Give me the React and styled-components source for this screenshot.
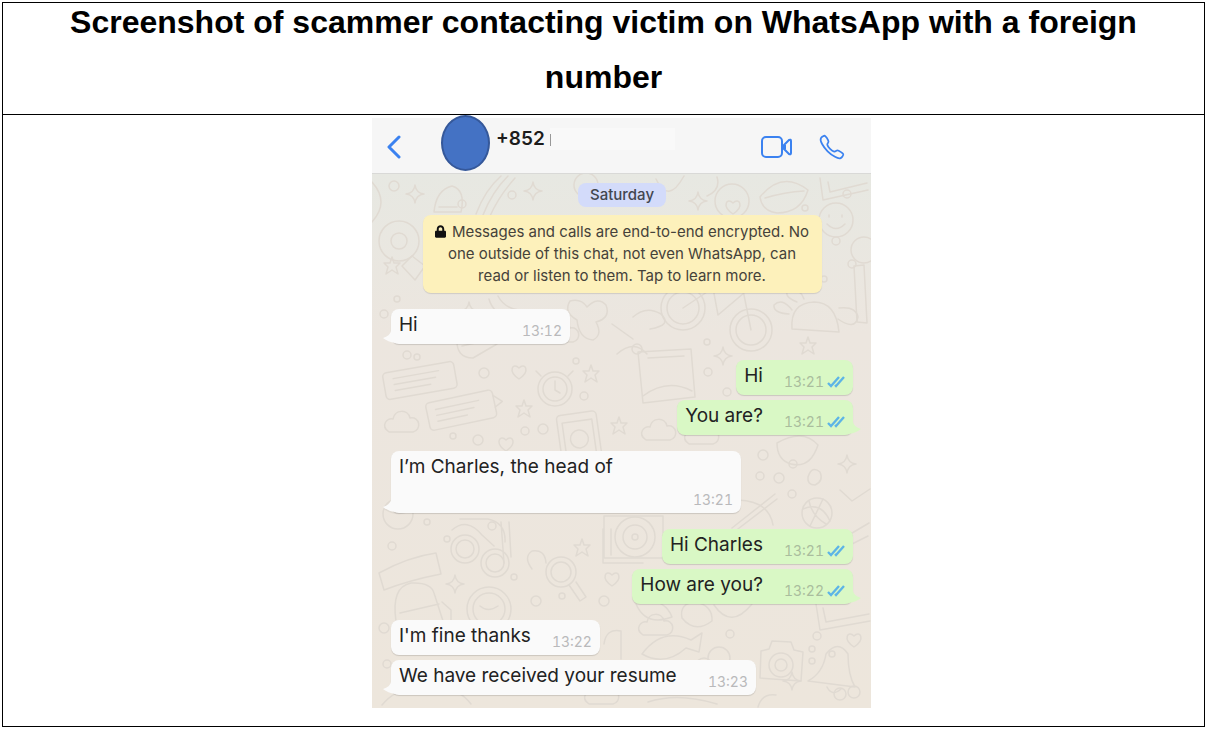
import styled, { createGlobalStyle } from "styled-components";
import { IoCallOutline } from "react-icons/io5";
import { FaLock } from "react-icons/fa";

const groups = [
  { side: "in", items: [{ text: "Hi", time: "13:12", minWidth: 179 }] },
  {
    side: "out",
    items: [
      { text: "Hi", time: "13:21" },
      { text: "You are?", time: "13:21" },
    ],
  },
  {
    side: "in",
    items: [
      {
        text: "I’m Charles, the head of",
        time: "13:21",
        minWidth: 350,
        tall: true,
      },
    ],
  },
  {
    side: "out",
    items: [
      { text: "Hi Charles", time: "13:21" },
      { text: "How are you?", time: "13:22" },
    ],
  },
  {
    side: "in",
    items: [
      { text: "I'm fine thanks", time: "13:22" },
      { text: "We have received your resume", time: "13:23", minWidth: 365 },
    ],
  },
];

const STAR = "M0-9 2-3 8-3 4 1 6 8 0 4-6 8-4 1-8-3-2-3Z";
const SPARK = "M0-9Q1-1 9 0Q1 1 0 9Q-1 1-9 0Q-1-1 0-9Z";
const HEART = "M0 7C-12-1-6-10 0-4C6-10 12-1 0 7Z";
const CLOUD = "M-13 8C-22 2-15-7-9-5C-7-15 6-15 8-6C18-8 20 6 11 8Z";

const marks = [
  [STAR, 152, 235], [STAR, 186, 312], [STAR, 219, 200], [STAR, 436, 172],
  [STAR, 210, 374], [STAR, 92, 312], [STAR, 247, 252], [STAR, 20, 92],
  [SPARK, 43, 20], [SPARK, 326, 27], [SPARK, 351, 182], [SPARK, 475, 290],
  [SPARK, 83, 410], [SPARK, 161, 17], [SPARK, 420, 507], [SPARK, 97, 137],
  [HEART, 134, 270], [HEART, 240, 405], [HEART, 361, 33], [HEART, 302, 296],
  [HEART, 147, 198], [HEART, 482, 466],
  [CLOUD, 30, 250], [CLOUD, 287, 258], [CLOUD, 284, 453], [CLOUD, 330, 262],
  [CLOUD, 190, 160], [CLOUD, 230, 522],
];

const dots = [
  [22, 12, 5], [140, 21, 4], [214, 11, 12], [90, 30, 4], [35, 181, 4],
  [45, 183, 3], [204, 187, 3], [112, 199, 5], [153, 257, 4], [171, 255, 5],
  [106, 266, 5], [212, 222, 4], [81, 262, 3], [391, 281, 5], [421, 290, 4],
  [388, 302, 4], [407, 304, 5], [336, 198, 4], [355, 218, 4], [464, 67, 4],
  [480, 90, 4], [452, 105, 3], [335, 168, 3], [142, 403, 3], [164, 427, 5],
  [232, 427, 5], [190, 422, 3], [12, 454, 5], [440, 475, 3], [440, 487, 3],
  [445, 462, 4], [358, 460, 4], [15, 490, 4], [460, 480, 3], [468, 520, 6],
  [482, 518, 6], [75, 365, 3], [55, 348, 3], [20, 372, 4], [120, 352, 4],
  [12, 140, 4], [25, 125, 3], [475, 20, 4], [433, 34, 3], [265, 175, 5],
];

const Doodles = () => (
  <Wallpaper viewBox="0 0 499 534" preserveAspectRatio="xMidYMin slice" aria-hidden="true">
    {marks.map(([d, x, y]) => (
      <path key={`${x}-${y}`} d={d} transform={`translate(${x} ${y})`} />
    ))}
    {dots.map(([x, y, r]) => (
      <circle key={`${x}-${y}`} cx={x} cy={y} r={r} />
    ))}
    {/* speech cards */}
    <g transform="rotate(-10 48 207)">
      <rect x="12" y="193" width="72" height="27" rx="4" />
      <path d="M22 200h46M22 206h42M22 212h36" />
    </g>
    <g transform="rotate(-12 90 235)">
      <rect x="55" y="222" width="68" height="28" rx="4" />
      <path d="M64 230h44M64 236h38M64 242h30M123 228l8 8-8 4" />
    </g>
    {/* clock */}
    <circle cx="183" cy="215" r="17" />
    <circle cx="183" cy="215" r="12" />
    <path d="M183 207v9l5 3M169 202l-5-5M196 202l5-5" />
    {/* photo frame */}
    <g transform="rotate(-8 207 262)">
      <rect x="187" y="239" width="40" height="50" rx="4" />
      <rect x="192" y="247" width="30" height="36" />
      <circle cx="207" cy="265" r="9" />
    </g>
    {/* book */}
    <path d="M266 178l53-3 4 48-52 6zM271 222q24-18 49-5M276 184l36-2" />
    {/* bicycle */}
    <circle cx="311" cy="134" r="22" />
    <circle cx="311" cy="134" r="16" />
    <circle cx="379" cy="156" r="21" />
    <circle cx="379" cy="156" r="15" />
    <path d="M311 134l30-20 30 2 8 40M341 114l5 27 26-22M364 107h14M334 108h12" />
    {/* smiley */}
    <circle cx="464" cy="46" r="17" />
    <path d="M457 41v2M470 41v2M455 50q9 9 18 0" />
    <circle cx="492" cy="76" r="13" />
    {/* turtle */}
    <path d="M420 155q-2-26 22-27 22 0 25 30zM417 140q-16-1-15-9 8-8 18 5M466 145q17 12 20-2-2-11-19-9M425 128q-15-6-8-13 12 0 15 10" />
    <path d="M482 92l3 56 10 1-3-58z" />
    {/* lips and skates on the top row */}
    <path d="M388 23q22-27 48-7-7 23-31 23-15-2-17-16zM393 24q20-6 39-7" />
    <circle cx="360" cy="27" r="17" />
    <path d="M448 4l3 22 45-10M456 8l2 10 37-9M284 5q12 26 28-3M345 3q4 13-10 19" />
    <path d="M104 40q9-24 25-38M111 41q9-23 25-39M118 42q9-20 25-38" />
    <path d="M62 38q2-22 18-26 14 4 9 26zM67 33h18" />
    {/* donut, guitar */}
    <circle cx="27" cy="67" r="20" />
    <circle cx="27" cy="67" r="8" />
    <path d="M0 8q18 20 0 40M30 92l10-10 13 10-10 14z" />
    <path d="M205 146q-14-8-7-19 11-3 17 6 11-11 19-2 5 13-10 17 7 13-3 18-14-1-16-20z" />
    <path d="M85 165l32-6 8 11-24 14q-17 0-16-19zM90 172l26-6M117 125q5 19 32 19M126 122q6 12 21 14" />
    <path d="M261 143q13-12 28-3 12 11-11 15M245 180q17-15 30 0M240 150l21 15" />
    {/* planet and pear */}
    <circle cx="420" cy="320" r="4" />
    <path d="M436 303q4-12 12-5 4 9-5 13-8 0-7-8zM405 269q26-15 41 2-8 24-27 19-14-4-14-21z" />
    <circle cx="445" cy="339" r="15" />
    <path d="M431 335q18-8 27 12M437 327q3 15 17 23M451 325l-13 27M360 354l43-34M362 358l43-33" />
    <path d="M468 316l12 11 18-12M470 365l27-16M476 372l20-10" />
    {/* vinyl */}
    <circle cx="263" cy="363" r="20" />
    <circle cx="263" cy="363" r="12" />
    <circle cx="263" cy="363" r="3" />
    <path d="M232 342h59v42h-59zM366 326q31 1 35 25" />
    {/* scooter */}
    <circle cx="93" cy="375" r="14" />
    <circle cx="93" cy="375" r="9" />
    <circle cx="123" cy="389" r="14" />
    <circle cx="123" cy="389" r="9" />
    <path d="M80 356q15-13 30 5l12 11M129 348l3 41M137 348l2 35M88 345h28q18 4 17 23" />
    <circle cx="26" cy="340" r="15" />
    <path d="M13 335q15 9 27 0" />
    {/* magnifier */}
    <circle cx="189" cy="398" r="15" />
    <circle cx="189" cy="398" r="10" />
    <path d="M197 411l11 16 6-4-10-15M160 395q-9-12 0-18 13-2 14 12" />
    <circle cx="117" cy="435" r="22" />
    <circle cx="117" cy="435" r="16" />
    <path d="M108 432q8 7 18 0" />
    {/* backpack */}
    <path d="M7 399q29-16 57-20l5 21q-31 6-57 16zM24 447q-5-34 15-38 20-1 23 10l9 28M28 439l39-9M70 428l9 8v14" />
    <path d="M231 355v34h40M239 355v26" />
    {/* fish, camera, bell */}
    <path d="M264 430q10 23 36 13-6-16-26-17M310 444q-3-15 14-16 17 4 16 19-17 13-30-3zM342 431q17 25 38-1M270 480q20-27 49-14l11-7-3 19-13-4q-21 19-44 6z" />
    <path d="M389 477l8-2 3-8 19 1 3 8 9 2-2 29-41-3z" />
    <circle cx="409" cy="491" r="12" />
    <circle cx="409" cy="491" r="6" />
    <path d="M436 507q15-8 18-27 12-15 22 0 0 21 7 33zM455 513q5 10 14 2M444 430l4 26 50-9M451 434l3 14 43-8" />
    <circle cx="347" cy="484" r="11" />
    <circle cx="332" cy="492" r="8" />
    <path d="M232 470q2-16 17-13v28M10 531q19-23 46-12 27-10 43 11M404 521q-14-2-18 12M276 528q30-10 69 2" />
  </Wallpaper>
);

const Ticks = () => (
  <TickIcon viewBox="0 0 18 12" role="img" aria-label="Read">
    <path d="M1 7l3 3L12 1M8 9l1 1 8-9" />
  </TickIcon>
);

const App = () => {
  return (
    <>
      <GlobalStyle />
      <Sheet>
        <CaptionCell>
          <Caption>
            Screenshot of scammer contacting victim on WhatsApp with a foreign
            number
          </Caption>
        </CaptionCell>
        <PhoneCell>
          <Phone>
            <ChatHeader>
              <IconButton type="button" aria-label="Back">
                <svg width="16" height="24" viewBox="0 0 16 24">
                  <path d="M13 2L3 12l10 10" strokeWidth="3" />
                </svg>
              </IconButton>
              <Avatar />
              <Contact>
                <Number>+852</Number>
                <Redacted />
              </Contact>
              <Actions>
                <IconButton type="button" aria-label="Video call">
                  <svg width="32" height="22" viewBox="0 0 32 22">
                    <rect x="1" y="1" width="20" height="20" rx="4" />
                    <path d="M22 10l6-6q2-1 2 1v12q0 2-2 1l-6-6zM24 9v4" />
                  </svg>
                </IconButton>
                <IconButton type="button" aria-label="Voice call">
                  <IoCallOutline size={28} />
                </IconButton>
              </Actions>
            </ChatHeader>
            <ChatBody>
              <Doodles />
              <DayPill>Saturday</DayPill>
              <Notice>
                <LockIcon />
                Messages and calls are end-to-end encrypted. No one outside of
                this chat, not even WhatsApp, can read or listen to them. Tap to
                learn more.
              </Notice>
              {groups.map((group, i) => (
                <Group key={i} $side={group.side}>
                  {group.items.map((msg, j) => (
                    <Bubble
                      key={j}
                      $side={group.side}
                      $minWidth={msg.minWidth}
                      $tall={msg.tall}
                    >
                      <Text>{msg.text}</Text>
                      <Meta $side={group.side}>
                        {msg.time}
                        {group.side === "out" && <Ticks />}
                      </Meta>
                      {j === group.items.length - 1 && (
                        <Tail $side={group.side} viewBox="0 0 12 12">
                          <path d="M12 0H8Q7 5 0 7Q5 11 12 12Z" />
                        </Tail>
                      )}
                    </Bubble>
                  ))}
                </Group>
              ))}
            </ChatBody>
          </Phone>
        </PhoneCell>
      </Sheet>
    </>
  );
};

const GlobalStyle = createGlobalStyle`
  * {
    box-sizing: border-box;
  }
  body {
    margin: 0;
    background: #fff;
    font-family: Inter, "Liberation Sans", sans-serif;
  }
`;
const Sheet = styled.main`
  margin: 2px 3px 3px 2px;
  border: 1px solid #000;
`;
const CaptionCell = styled.header`
  padding: 0 60px 9px;
  border-bottom: 1px solid #000;
`;
const Caption = styled.h1`
  margin: -8px 0 0;
  font-family: "Liberation Sans", Arial, sans-serif;
  font-size: 32px;
  line-height: 55px;
  font-weight: 700;
  text-align: center;
  color: #000;
`;
const PhoneCell = styled.div`
  display: flex;
  justify-content: center;
  padding: 3px 0 18px 36px;
`;
const Phone = styled.section`
  width: 100%;
  max-width: 499px;
`;
const ChatHeader = styled.div`
  display: flex;
  align-items: flex-start;
  height: 56px;
  padding: 0 25px 0 14px;
  background: #f6f6f6;
  border-bottom: 1px solid #d9d9d7;
`;
const IconButton = styled.button`
  display: flex;
  align-items: center;
  height: 58px;
  padding: 0;
  border: none;
  background: none;
  color: #3b82f0;

  svg {
    fill: none;
    stroke: currentColor;
    stroke-width: 2;
    stroke-linecap: round;
    stroke-linejoin: round;
  }
`;
const Avatar = styled.div`
  width: 49px;
  height: 56px;
  margin: -3px 6px 0 39px;
  border: 2px solid #35589a;
  border-radius: 50%;
  background: #4472c4;
`;
const Contact = styled.div`
  display: flex;
  flex: 1;
  align-items: center;
  gap: 5px;
  padding-top: 9px;
`;
const Number = styled.span`
  font-size: 19px;
  line-height: 24px;
  font-weight: 600;
  color: #1c1c1c;
`;
const Redacted = styled.span`
  width: 125px;
  height: 22px;
  background: linear-gradient(#999, #999) 0 6px / 1px 12px no-repeat #f9f9f9;
`;
const Actions = styled.div`
  display: flex;
  gap: 25px;
`;
const ChatBody = styled.div`
  position: relative;
  display: flex;
  flex-direction: column;
  padding: 9px 18px 13px 19px;
  background: linear-gradient(#e7e8e2, #ece6df 30%, #ede6dc);
`;
const Wallpaper = styled.svg`
  position: absolute;
  inset: 0;
  width: 100%;
  height: 100%;
  fill: none;
  stroke: #e0dad2;
  stroke-width: 1.5;
  stroke-linejoin: round;
  stroke-linecap: round;
`;
const DayPill = styled.div`
  position: relative;
  align-self: center;
  padding: 0 12px;
  border-radius: 8px;
  background: #d3dbfa;
  font-size: 15px;
  line-height: 24px;
  font-weight: 500;
  color: #42464f;
`;
const Notice = styled.p`
  position: relative;
  align-self: center;
  max-width: 399px;
  margin: 8px 0 0;
  padding: 6px 12px;
  border-radius: 8px;
  background: #fdf1bb;
  box-shadow: 0 1px 1px rgba(0, 0, 0, 0.12);
  font-size: 15px;
  line-height: 22px;
  text-align: center;
  color: #45423a;
`;
const LockIcon = styled(FaLock)`
  width: 11px;
  height: 13px;
  margin-right: 6px;
  vertical-align: -1px;
  color: #111;
`;
const Group = styled.div`
  position: relative;
  display: flex;
  flex-direction: column;
  align-items: ${({ $side }) => ($side === "out" ? "flex-end" : "flex-start")};
  gap: 5px;
  margin-top: 16px;
`;
const Bubble = styled.div`
  position: relative;
  display: flex;
  justify-content: space-between;
  gap: 21px;
  min-width: ${({ $minWidth }) => ($minWidth ? `${$minWidth}px` : "0")};
  min-height: ${({ $tall }) => ($tall ? "62px" : "35px")};
  padding: 4px 8px;
  border-radius: 8px;
  background: ${({ $side }) => ($side === "out" ? "#d9f8c5" : "#fafafa")};
  box-shadow: 0 1px 1px rgba(0, 0, 0, 0.14);
`;
const Text = styled.span`
  font-size: 19px;
  line-height: 24px;
  color: #222;
`;
const Meta = styled.span`
  display: flex;
  align-items: center;
  align-self: flex-end;
  gap: 3px;
  font-size: 14px;
  line-height: 18px;
  font-variant-numeric: tabular-nums;
  color: ${({ $side }) => ($side === "out" ? "#a9bd9d" : "#b9b9bb")};
`;
const TickIcon = styled.svg`
  width: 18px;
  height: 12px;
  fill: none;
  stroke: #5db4e6;
  stroke-width: 2.3;
`;
const Tail = styled.svg`
  position: absolute;
  bottom: 1px;
  ${({ $side }) =>
    $side === "out" ? "right: -8px; transform: scaleX(-1);" : "left: -8px;"}
  width: 12px;
  height: 12px;
  fill: ${({ $side }) => ($side === "out" ? "#d9f8c5" : "#fafafa")};
`;

export default App;
